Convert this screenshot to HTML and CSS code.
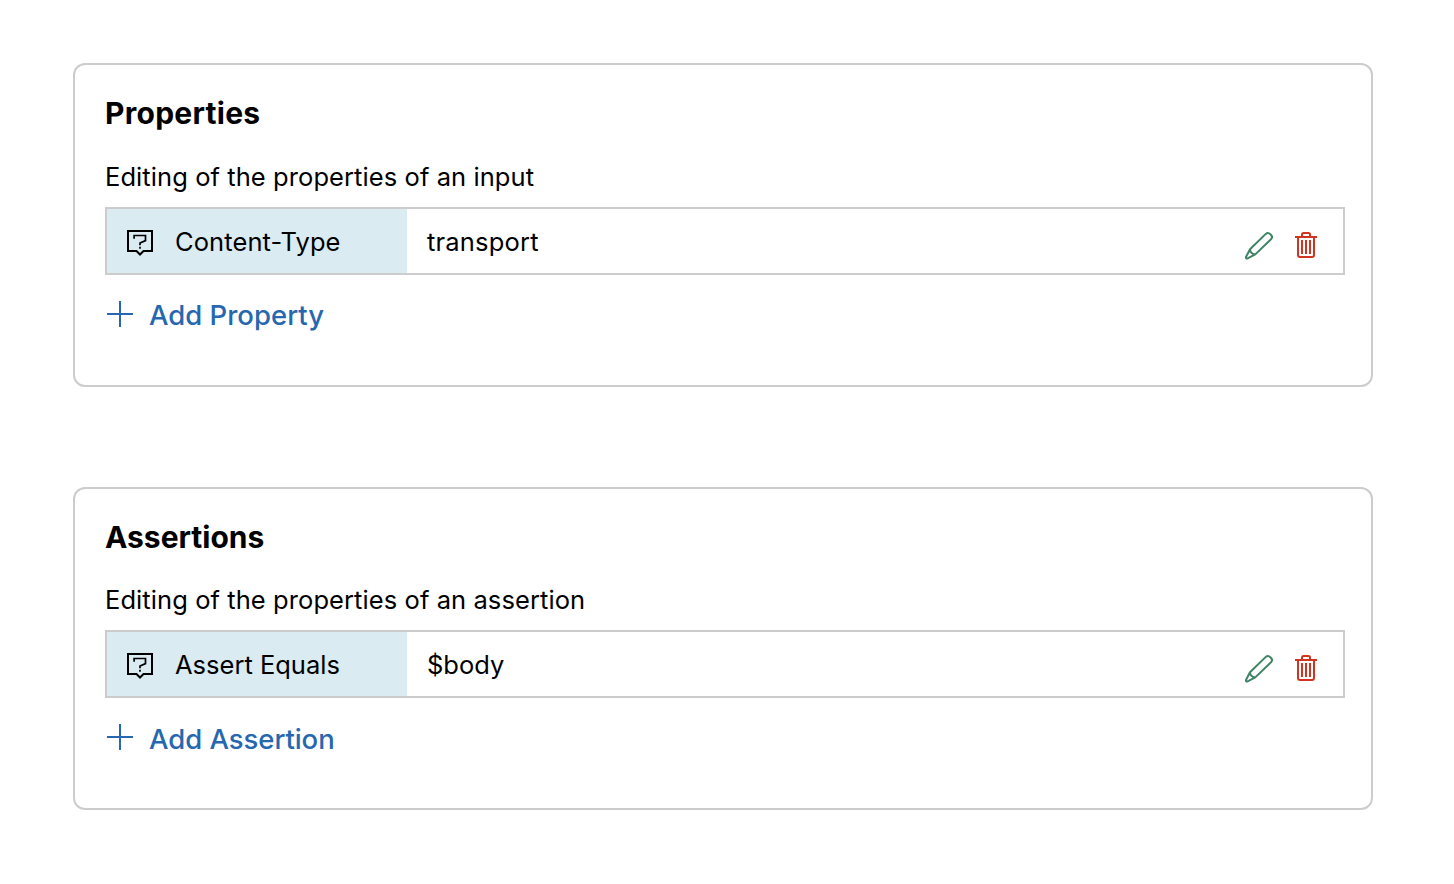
FILE: index.html
```html
<!DOCTYPE html>
<html lang="en">
<head>
<meta charset="utf-8">
<title>Properties and Assertions</title>
<link rel="stylesheet" href="styles.css">
</head>
<body>
<svg width="0" height="0" class="sprite" aria-hidden="true">
  <symbol id="question" viewBox="0 0 28 28">
    <path d="M2 2H26V22H17.5L14 25.5L10.5 22H2Z" stroke-width="2"/>
    <path d="M8.1 9.8V6.5H19.5V11.6L14 14V16.2M14 17.8V19.8" stroke-width="1.7"/>
  </symbol>
  <symbol id="pencil" viewBox="0 0 30 30">
    <path d="M7 18.2L22.8 2.9C25.7 0.4 31 5 28 8.2L12.3 23.4L4.6 27.4C3.4 27.9 2.6 27 3.1 25.8ZM7 18.2C7.2 21 9 23 12.3 23.4" stroke-width="2" stroke-linejoin="round"/>
  </symbol>
  <symbol id="trash" viewBox="0 0 22 26">
    <path d="M0 5H22M7 5V2.5Q7 1 8.5 1H13.5Q15 1 15 2.5V5M3 5V23Q3 25 5 25H17Q19 25 19 23V5M7 8V22M11 8V22M15 8V22" stroke-width="2"/>
  </symbol>
  <symbol id="plus" viewBox="0 0 26 26">
    <path d="M0 13H26M13 0V26" stroke-width="2"/>
  </symbol>
</svg>
<main class="page">
  <section class="card">
    <h2 class="title"><span class="t-properties">Properties</span></h2>
    <p class="description"><span class="t-input">Editing of the properties of an input</span></p>
    <div class="row">
      <div class="key"><svg class="icon icon-question"><use href="#question"/></svg><span class="t-type">Content-Type</span></div>
      <div class="value"><span class="t-transport">transport</span></div>
      <div class="actions"><svg class="icon icon-pencil"><use href="#pencil"/></svg><svg class="icon icon-trash"><use href="#trash"/></svg></div>
    </div>
    <a class="add"><svg class="icon icon-plus"><use href="#plus"/></svg><span class="t-add-property">Add Property</span></a>
  </section>
  <section class="card card-assertions">
    <h2 class="title"><span class="t-assertions">Assertions</span></h2>
    <p class="description"><span class="t-assertion">Editing of the properties of an assertion</span></p>
    <div class="row">
      <div class="key"><svg class="icon icon-question"><use href="#question"/></svg><span class="t-equals">Assert Equals</span></div>
      <div class="value"><span class="t-body">$body</span></div>
      <div class="actions"><svg class="icon icon-pencil"><use href="#pencil"/></svg><svg class="icon icon-trash"><use href="#trash"/></svg></div>
    </div>
    <a class="add"><svg class="icon icon-plus"><use href="#plus"/></svg><span class="t-add-assertion">Add Assertion</span></a>
  </section>
</main>
</body>
</html>
```
FILE: styles.css
```css
* { box-sizing: border-box; }
body { margin: 0; background: #fff; color: #000; font: 400 25.5px/32px Inter, sans-serif; }
.sprite { display: block; }
.page { display: flex; flex-direction: column; gap: 100px; padding: 63px 81px 0 73px; }
.card { height: 324px; border: 2px solid #ccc; border-radius: 12px; padding: 28px 26px 0 30px; }
.card-assertions { height: 323px; }
.title { margin: 0; font-size: 30px; line-height: 40px; font-weight: 700; }
.t-properties { letter-spacing: 0.27px; }
.description { margin: 0; padding-top: 28px; height: 74px; letter-spacing: 0.08px; }
.card-assertions .description { height: 73px; padding-top: 27px; }
.row { display: flex; height: 68px; border: 2px solid #ccc; }
.key { display: flex; width: 300px; background: #daebf1; padding: 17px 0 0 19px; gap: 21px; }
.value { flex: 1; padding: 17px 0 0 20px; }
.t-type { letter-spacing: 0.1px; }
.t-transport { letter-spacing: 0.18px; }
.actions { display: flex; padding: 22px 26px 0 0; gap: 22px; }
.icon { display: block; flex: none; fill: none; stroke: currentColor; }
.icon-question { width: 28px; height: 28px; margin-top: 3px; }
.icon-pencil { width: 30px; height: 30px; color: #3f8464; }
.icon-trash { width: 22px; height: 26px; margin-top: 1px; color: #d13522; }
.icon-plus { width: 26px; height: 26px; }
.add { display: flex; width: fit-content; gap: 16px; padding: 26px 0 0 2px; color: #2767b0; font-size: 27.5px; line-height: 28px; font-weight: 550; }
.t-add-assertion { padding-top: 1px; letter-spacing: -0.05px; }
```
